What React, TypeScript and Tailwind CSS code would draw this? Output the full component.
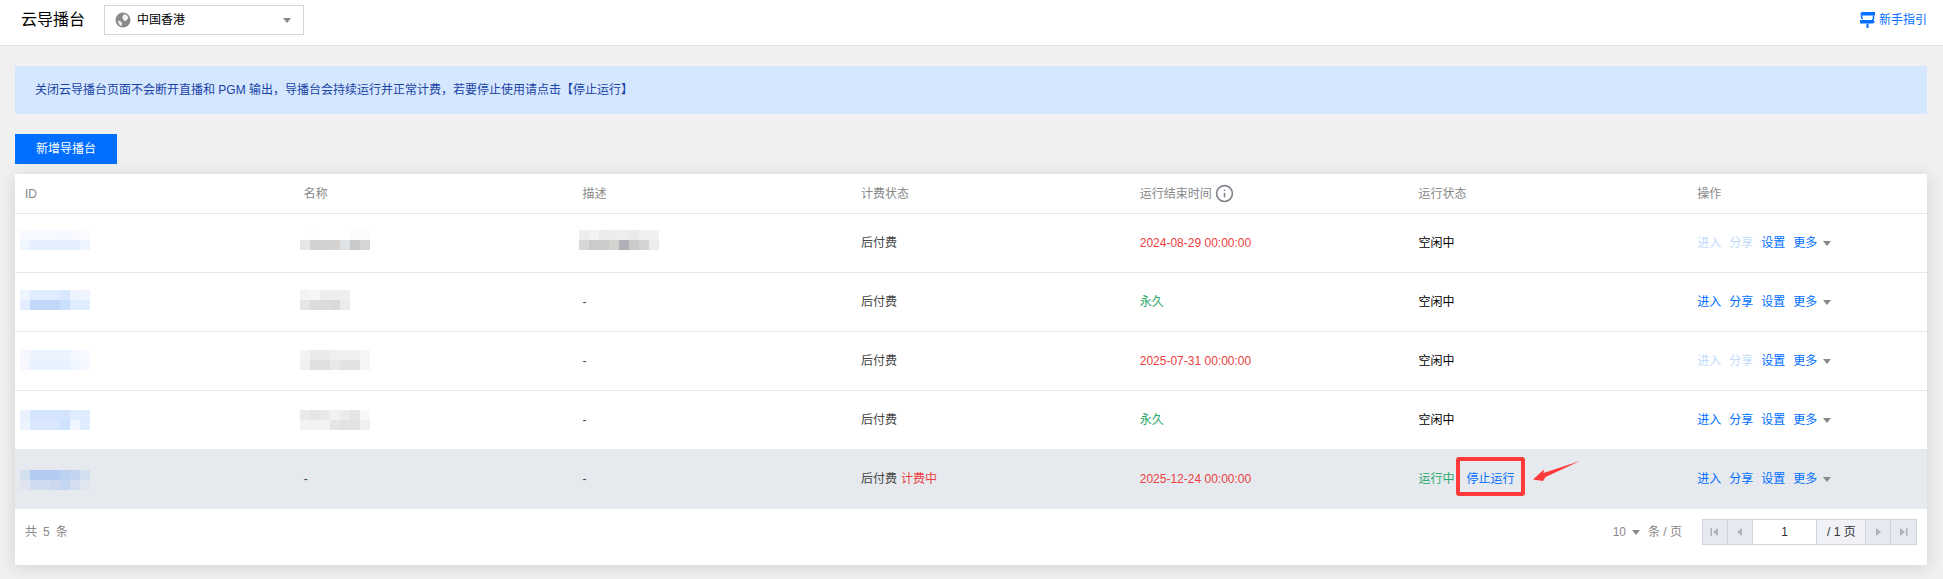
import { Info } from 'lucide-react';

type Mosaic = string[][];

// blurred cells of the screenshot, two rows of 10px blocks
const idBlur: Mosaic[] = [
    [
        ['#f8faff', '#f6f9ff', '#f6f9ff', '#f6f9ff', '#f4f8ff', '#f8faff', '#fafcff'],
        ['#f0f6ff', '#e3eeff', '#e3eeff', '#e3eeff', '#e3eeff', '#e3eeff', '#eff5ff'],
    ],
    [
        ['#eff5ff', '#e0ecff', '#e0ecff', '#e0ecff', '#d9e8ff', '#ecf3ff', '#eff5ff'],
        ['#e4edff', '#c3d7fb', '#c3d7fb', '#c3d7fb', '#c9e0ff', '#e0ecff', '#e0ecff'],
    ],
    [
        ['#f5f9ff', '#ebf3ff', '#ebf3ff', '#ebf3ff', '#ebf3ff', '#f3f7ff', '#f6f9ff'],
        ['#f5f9ff', '#e8f1ff', '#e8f1ff', '#e8f1ff', '#e8f1ff', '#f0f6ff', '#f5f9ff'],
    ],
    [
        ['#e9f1ff', '#d4e4ff', '#d4e4ff', '#d4e4ff', '#d4e4ff', '#e0ecff', '#dfecff'],
        ['#ecf3ff', '#d9e8ff', '#d9e8ff', '#d9e8ff', '#cfe2ff', '#f0f6ff', '#e0ecff'],
    ],
    [
        ['#d3e0f0', '#b3cbf0', '#b3cbf0', '#b3cbf0', '#bcd0f0', '#c3d5ee', '#d3e0f0'],
        ['#dfe5f0', '#cfdbee', '#cfdbee', '#cbd8ee', '#c3d5ef', '#d3def0', '#e0e6ef'],
    ],
];

const nameBlur: (Mosaic | null)[] = [
    [
        ['#ffffff', '#fdfdfd', '#ffffff', '#ffffff', '#ffffff', '#fcfcfc', '#fcfcfc'],
        ['#e6e6e6', '#d2d2d2', '#d2d2d2', '#d5d3d1', '#e0e3e6', '#c9c9c9', '#d6d6d6'],
    ],
    [
        ['#f3f3f3', '#f5f6f5', '#ededed', '#eeeeee', '#eeeeee'],
        ['#e5e5e5', '#dcdcdc', '#dcdcdc', '#d9d9d9', '#ebebeb'],
    ],
    [
        ['#f3f3f3', '#eaeaea', '#eaeaea', '#f0f0f0', '#efefef', '#efefef', '#f6f6f6'],
        ['#efefef', '#dfdfdf', '#dfdfdf', '#e8e8e8', '#e2e2e2', '#e2e2e2', '#f5f5f5'],
    ],
    [
        ['#e9e9e9', '#e4e5e4', '#e9e9e9', '#f1f1f1', '#ebebeb', '#e5e5e5', '#f8f8f8'],
        ['#f3f3f3', '#f1f2f2', '#f3f3f3', '#e6e6e6', '#e2e2e2', '#e2e2e2', '#f0f0f2'],
    ],
    null,
];

const descBlur: Mosaic = [
    ['#eeedeb', '#f1f2f1', '#eaebeb', '#eceded', '#eceded', '#e9eaea', '#eeefef', '#f1f1f1'],
    ['#d7d7d5', '#cacbcb', '#cacbcb', '#d4d3cf', '#b0b1b6', '#cbcaca', '#d4d4d4', '#ececec'],
];

const rows = [
    { end: '2024-08-29 00:00:00', forever: false, running: false, disabled: true, rowClass: 'h-[59px] border-b border-[#e5e8ee]', blurClass: 'mb-1.5' },
    { end: '永久', forever: true, running: false, disabled: false, rowClass: 'h-[59px] border-b border-[#e5e8ee]', blurClass: 'mb-1' },
    { end: '2025-07-31 00:00:00', forever: false, running: false, disabled: true, rowClass: 'h-[59px] border-b border-[#e5e8ee]', blurClass: 'mb-[3px]' },
    { end: '永久', forever: true, running: false, disabled: false, rowClass: 'h-[58px]', blurClass: 'mb-0' },
    { end: '2025-12-24 00:00:00', forever: false, running: true, disabled: false, rowClass: 'h-[60px] bg-[#e6e9ee]', blurClass: 'mt-px' },
];

const gridCols = 'grid grid-cols-[repeat(6,278.7px)_1fr]';

const Blur = ({ cells, className }: { cells: Mosaic; className: string }) => (
    <svg width={cells[0].length * 10} height={20} className={`block ${className}`}>
        {cells.map((row, y) =>
            row.map((color, x) => <rect key={`${x}-${y}`} x={x * 10} y={y * 10} width={10} height={10} fill={color} />)
        )}
    </svg>
);

const Caret = () => (
    <svg width="8" height="5" viewBox="0 0 8 5" className="block">
        <path d="M0 0h8L4 5z" fill="#888888" />
    </svg>
);

const GlobeIcon = () => (
    <svg width="16" height="16" viewBox="0 0 16 16" className="shrink-0">
        <circle cx="8" cy="8" r="7.5" fill="#8a8a8a" />
        <path d="M9 2.2c2 .1 3.8 1.6 4.3 3.6L11.5 8.4 9.6 9 7.8 7l-.3-2.4z" fill="#f4f4f4" />
        <path d="M2.8 8.6l2.6.6 1.6 1.7-.5 3-1.6-.7-1.4-2.2z" fill="#f4f4f4" />
    </svg>
);

const GuideIcon = () => (
    <svg width="15" height="16" viewBox="0 0 15 16" className="shrink-0">
        <path d="M2 0H15V3.5H2L0 1.75z" fill="#006eff" />
        <path d="M0 8H13L15 9.75 13 11.5H0z" fill="#006eff" />
        <path d="M1.5 3V5C1.5 6 2 6.5 3 6.5M13.5 3.5V6.5C13.5 7.5 13 8 12 8" stroke="#006eff" strokeWidth="1.5" fill="none" />
        <path d="M6.5 11.5H8.5V16H6.5z" fill="#006eff" />
    </svg>
);

const PagerButton = ({ dir, edge }: { dir: 'left' | 'right'; edge?: boolean }) => (
    <button className="flex h-full w-[25px] items-center justify-center border-r border-[#cfd5de] bg-[#e6e9ef] last:border-r-0">
        <svg width="9" height="10" viewBox="0 0 9 10" className={dir === 'right' ? 'rotate-180' : ''}>
            {edge && <path d="M0.5 1H2V9H0.5z" fill="#b0b3b8" />}
            <path d={edge ? 'M8 1V9L3 5z' : 'M7 1V9L2 5z'} fill="#b0b3b8" />
        </svg>
    </button>
);

const Actions = ({ disabled }: { disabled: boolean }) => (
    <div className="flex items-center gap-2 text-[#006eff]">
        <a className={disabled ? 'text-[#c2dbfd]' : ''}>进入</a>
        <a className={disabled ? 'text-[#c2dbfd]' : ''}>分享</a>
        <a>设置</a>
        <a className="flex items-center gap-1.5">
            更多
            <Caret />
        </a>
    </div>
);

const App = () => {
    return (
        <div className="h-screen overflow-hidden bg-[#f0f0f0] font-['Liberation_Sans','Noto_Sans_CJK_SC',sans-serif] text-[12px] text-black">
            {/* Top bar */}
            <header className="flex h-[46px] items-center justify-between border-b border-[#dddddd] bg-white pb-[5px] pl-[21px] pr-4">
                <div className="flex items-center gap-[19px]">
                    <h1 className="text-[16px] font-normal">云导播台</h1>
                    <div className="flex h-[30px] w-[200px] items-center gap-1.5 border border-[#cfd5de] pl-[10px] pr-3">
                        <GlobeIcon />
                        <span>中国香港</span>
                        <span className="ml-auto">
                            <Caret />
                        </span>
                    </div>
                </div>
                <a className="flex items-center gap-1 text-[#006eff]">
                    <GuideIcon />
                    新手指引
                </a>
            </header>

            <main className="pl-[15px] pr-4 pt-5">
                <div className="flex h-12 items-center bg-[#d5e7ff] px-5 text-[#1a43a5]">
                    关闭云导播台页面不会断开直播和 PGM 输出，导播台会持续运行并正常计费，若要停止使用请点击【停止运行】
                </div>

                <button className="mt-5 block h-[30px] w-[102px] bg-[#006eff] text-white">新增导播台</button>

                {/* Table card */}
                <section className="mt-2.5 bg-white shadow-[0_2px_16px_rgba(0,0,0,0.13)]">
                    <div className={`${gridCols} h-10 items-center border-b border-[#e5e8ee] text-[#888888]`}>
                        <div className="px-2.5">ID</div>
                        <div className="px-2.5">名称</div>
                        <div className="px-2.5">描述</div>
                        <div className="px-2.5">计费状态</div>
                        <div className="flex items-center gap-[3px] px-2.5">
                            运行结束时间
                            <Info size={19} strokeWidth={2} color="#7d8289" />
                        </div>
                        <div className="px-2.5">运行状态</div>
                        <div className="px-2.5">操作</div>
                    </div>

                    {rows.map((row, i) => (
                        <div key={i} className={`${gridCols} items-center ${row.rowClass}`}>
                            <div className="px-2.5">
                                <Blur cells={idBlur[i]} className={`-ml-[5px] ${row.blurClass}`} />
                            </div>
                            <div className="px-2.5 text-[#444444]">
                                {nameBlur[i] ? <Blur cells={nameBlur[i] as Mosaic} className={`-ml-1 ${row.blurClass}`} /> : '-'}
                            </div>
                            <div className="px-2.5 text-[#444444]">
                                {i === 0 ? <Blur cells={descBlur} className={`-ml-[3px] ${row.blurClass}`} /> : '-'}
                            </div>
                            <div className="px-2.5 text-[#444444]">
                                后付费
                                {row.running && <span className="ml-1 text-[#eb4040]">计费中</span>}
                            </div>
                            <div className={`px-2.5 ${row.forever ? 'text-[#29a96a]' : 'text-[#eb4040]'}`}>{row.end}</div>
                            <div className="relative px-2.5">
                                {row.running ? (
                                    <>
                                        <span className="text-[#29a96a]">运行中</span>
                                        <a className="ml-3 text-[#006eff]">停止运行</a>
                                        {/* red annotation drawn on the screenshot */}
                                        <div className="absolute left-[47.5px] top-[-13px] h-[39px] w-[69px] rounded-[3px] border-4 border-[#ff3a3a]" />
                                        <svg
                                            width="48"
                                            height="22"
                                            viewBox="0 0 48 22"
                                            className="absolute left-[125px] top-[-10px]"
                                        >
                                            <path d="M0 19.5L11 9.5 10.5 13 47 1 12.5 17 10 21z" fill="#ff3a3a" />
                                        </svg>
                                    </>
                                ) : (
                                    '空闲中'
                                )}
                            </div>
                            <div className="px-2.5">
                                <Actions disabled={row.disabled} />
                            </div>
                        </div>
                    ))}

                    {/* Footer / pagination */}
                    <div className="flex h-14 items-center justify-between pb-2.5 pl-2.5 pr-2.5 text-[#888888]">
                        <span className="flex gap-1.5">
                            <span>共</span>
                            <span>5</span>
                            <span>条</span>
                        </span>
                        <div className="flex items-center">
                            <span className="flex items-center gap-1.5">
                                10
                                <Caret />
                            </span>
                            <span className="ml-2">条 / 页</span>
                            <div className="ml-5 flex h-[26px] w-[215px] border border-[#cfd5de] text-[#333333]">
                                <PagerButton dir="left" edge />
                                <PagerButton dir="left" />
                                <div className="flex w-[64px] items-center justify-center bg-white">1</div>
                                <div className="flex w-[50px] items-center justify-center border-x border-[#cfd5de] bg-[#f0f2f7]">
                                    / 1 页
                                </div>
                                <PagerButton dir="right" />
                                <PagerButton dir="right" edge />
                            </div>
                        </div>
                    </div>
                </section>
            </main>
        </div>
    );
};

export default App;
